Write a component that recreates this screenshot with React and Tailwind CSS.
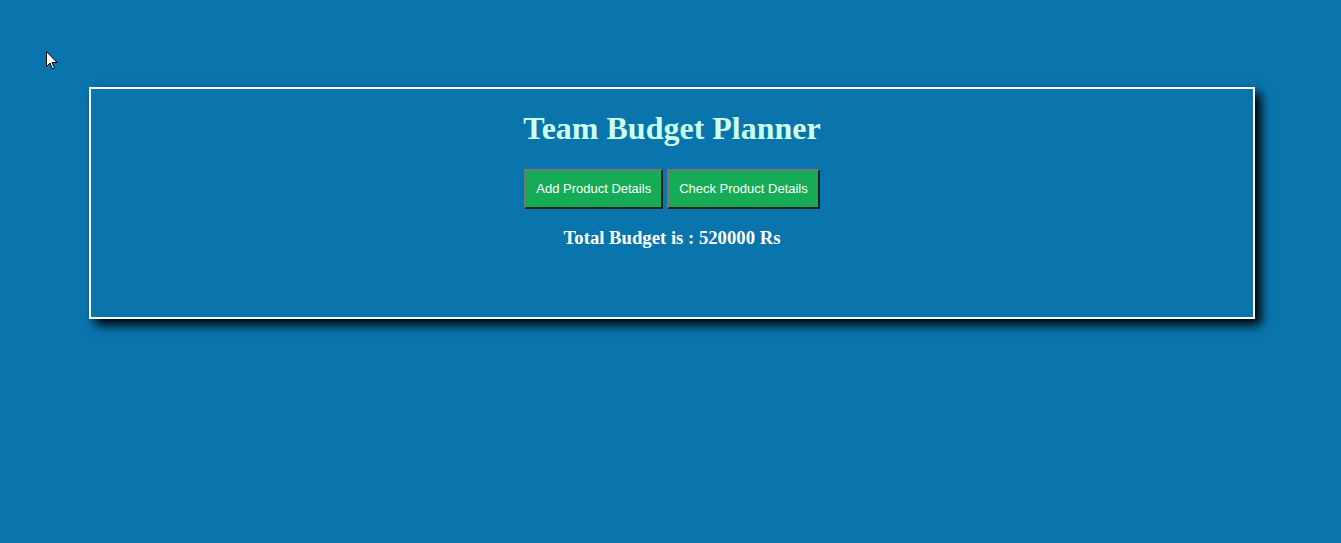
import React from "react";

const Cursor = () => (
  <svg className="absolute left-[46px] top-[51px]" width="13" height="20" viewBox="0 0 13 20">
    <path d="M0.5 0.5 L0.5 15.5 L4 12 L6.5 18 L8.5 17 L6 11.5 L11 11.5 Z" fill="#fff" stroke="#000" strokeWidth="1" />
  </svg>
);

const btn =
  "h-[40px] px-[10px] bg-[#16ab56] text-white text-[13px] font-['Liberation_Sans',sans-serif] border-2 border-t-[#767676] border-l-[#767676] border-r-[#1f1f1f] border-b-[#1f1f1f]";

const App = () => {
  return (
    <div className="relative min-h-[543px] bg-[#0a75ad] pt-[87px] font-['Liberation_Serif',serif]">
      <Cursor />
      {/* Planner card */}
      <div className="ml-[89px] w-[1166px] h-[232px] border-2 border-white shadow-[6px_6px_10px_#000] text-center">
        <h1 className="mt-[20px] text-[32px] leading-[38px] font-bold text-[#ccffee]">
          Team Budget Planner
        </h1>
        <div className="mt-[22px] flex justify-center gap-[4px]">
          <button className={btn}>Add Product Details</button>
          <button className={btn}>Check Product Details</button>
        </div>
        <p className="mt-[18px] text-[18.7px] leading-[22px] font-bold text-white">
          Total Budget is : 520000 Rs
        </p>
      </div>
    </div>
  );
};

export default App;
